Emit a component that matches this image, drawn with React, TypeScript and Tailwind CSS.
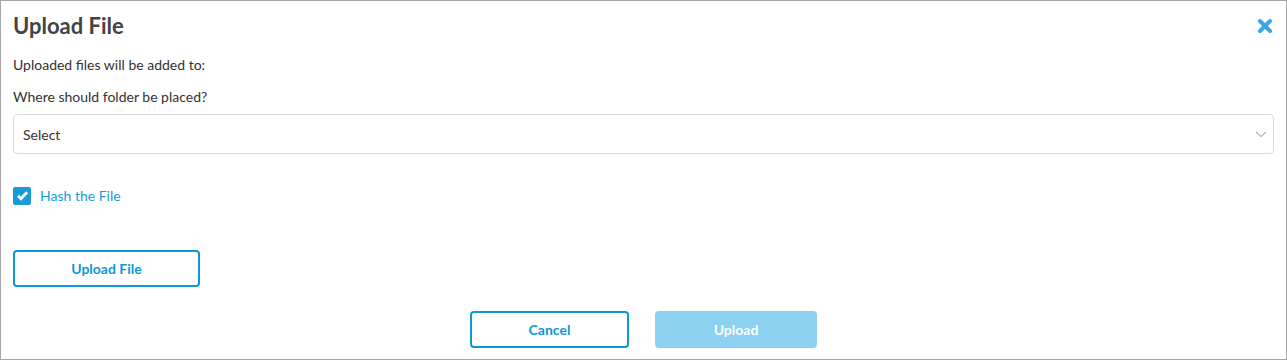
import React from 'react';

export default function App() {
  return (
    <div className="w-[1287px] h-[360px] bg-white border border-[#a6a6a6] font-['Lato',sans-serif] text-[#333] flex flex-col px-3">
      {/* Header */}
      <div className="flex items-center justify-between pt-[7px] h-[42px]">
        <h2 className="text-[22px] font-bold text-[#444] leading-none">Upload File</h2>
        <button className="text-[#3aa7e0] mr-[1px]">
          <svg width="16" height="16" viewBox="0 0 16 16">
            <path d="M3 3 L13 13 M13 3 L3 13" stroke="currentColor" strokeWidth="4" strokeLinecap="round" />
          </svg>
        </button>
      </div>

      <p className="text-[14px] mt-[13px] leading-[18px]">Uploaded files will be added to:</p>
      <p className="text-[14px] mt-[14px] leading-[18px]">Where should folder be placed?</p>

      {/* Select */}
      <div className="mt-[8px] h-[40px] border border-[#d9d9d9] rounded-[4px] flex items-center justify-between pl-[9px] pr-[5px]">
        <span className="text-[14px] text-[#333]">Select</span>
        <svg width="14" height="14" viewBox="0 0 14 14" className="text-[#888]">
          <path d="M2 5 L7 9.5 L12 5" fill="none" stroke="currentColor" strokeWidth="1" />
        </svg>
      </div>

      {/* Checkbox */}
      <label className="mt-[31px] flex items-center gap-[9px]">
        <span className="w-[18px] h-[18px] rounded-[2px] bg-[#1a9bd7] flex items-center justify-center">
          <svg width="13" height="13" viewBox="0 0 12 12">
            <path d="M1.8 6.2 L4.6 9 L10.2 3" fill="none" stroke="white" strokeWidth="2.6" />
          </svg>
        </span>
        <span className="text-[14px] text-[#1a9bd7]">Hash the File</span>
      </label>

      {/* Upload File button */}
      <button className="mt-[44px] w-[187px] h-[37px] border-2 border-[#0a98d8] rounded-[4px] text-[14px] font-bold text-[#0a98d8]">
        Upload File
      </button>

      {/* Footer */}
      <div className="mt-[24px] flex justify-center gap-[26px]">
        <button className="w-[159px] h-[37px] border-2 border-[#0a98d8] rounded-[4px] text-[14px] font-bold text-[#0a98d8]">
          Cancel
        </button>
        <button className="w-[162px] h-[37px] rounded-[4px] bg-[#8dd1f1] text-[14px] font-bold text-white">
          Upload
        </button>
      </div>
    </div>
  );
}
